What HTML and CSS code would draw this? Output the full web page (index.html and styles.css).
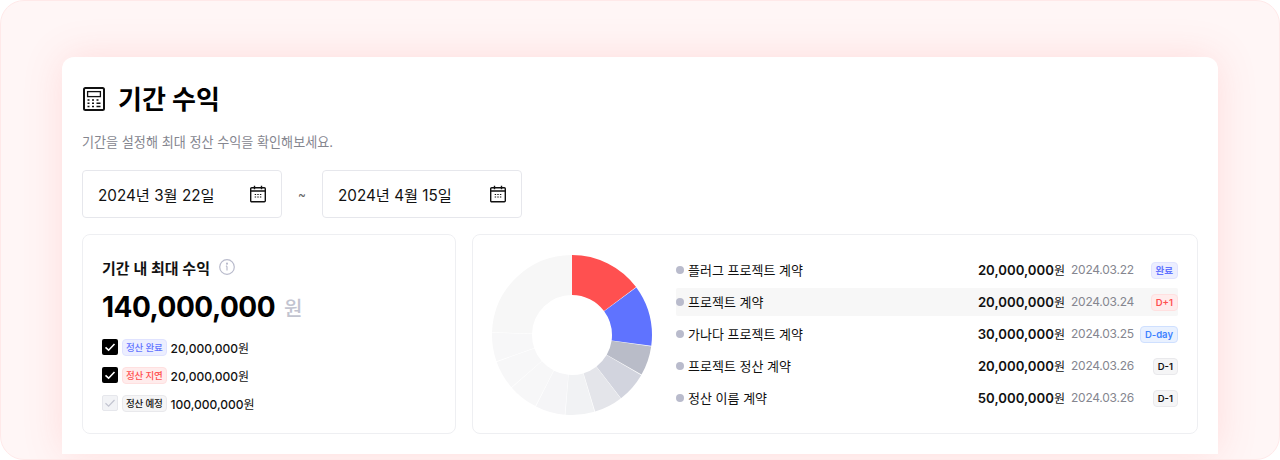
FILE: index.html
```html
<!DOCTYPE html>
<html lang="ko">
<head>
    <meta charset="utf-8">
    <title>기간 수익</title>
    <link rel="stylesheet" href="styles.css">
</head>
<body>
    <div class="frame">
        <div class="card">
            <div class="title-row">
                <svg class="title-icon" width="24" height="24" viewBox="0 0 24 24" fill="none" stroke="#111" stroke-width="2">
                    <rect x="2" y="1" width="20" height="22" rx="1.5"/>
                    <rect x="5.6" y="4.6" width="12.8" height="5" stroke-width="1.3"/>
                    <path d="M5.5 13h2M10 13h2M14.5 13h2M5.5 16.2h2M10 16.2h2M14.5 16.2h4M5.5 19.4h2M10 19.4h2M14.5 19.4h4" stroke-width="1.5"/>
                </svg>
                <h1 class="title">기간 수익</h1>
            </div>
            <p class="subtitle">기간을 설정해 최대 정산 수익을 확인해보세요.</p>

            <div class="date-row">
                <div class="date-box">
                    <span>2024년 3월 22일</span>
                    <svg width="18" height="18" viewBox="0 0 18 18" fill="none" stroke="#111" stroke-width="1.4">
                        <rect x="1.7" y="2.7" width="14.6" height="14" rx="1"/>
                        <path d="M1.7 6h14.6M5.5 .8v3.4M12.5 .8v3.4"/>
                        <path d="M5.7 9.5h1.4M8.3 9.5h1.4M10.9 9.5h1.4M5.7 12h1.4M8.3 12h1.4M10.9 12h1.4" stroke-width="1.2"/>
                    </svg>
                </div>
                <span class="tilde">~</span>
                <div class="date-box">
                    <span>2024년 4월 15일</span>
                    <svg width="18" height="18" viewBox="0 0 18 18" fill="none" stroke="#111" stroke-width="1.4">
                        <rect x="1.7" y="2.7" width="14.6" height="14" rx="1"/>
                        <path d="M1.7 6h14.6M5.5 .8v3.4M12.5 .8v3.4"/>
                        <path d="M5.7 9.5h1.4M8.3 9.5h1.4M10.9 9.5h1.4M5.7 12h1.4M8.3 12h1.4M10.9 12h1.4" stroke-width="1.2"/>
                    </svg>
                </div>
            </div>

            <div class="panels">
                <div class="panel panel-total">
                    <div class="total-head">
                        <span>기간 내 최대 수익</span>
                        <svg width="16" height="16" viewBox="0 0 16 16" fill="none" stroke="#b9bbcc" stroke-width="1.2">
                            <circle cx="8" cy="8" r="7.3"/>
                            <path d="M8 7.2v4.3M6.9 7.2H8" stroke-width="1.2"/>
                            <circle cx="8" cy="4.7" r=".5"/>
                        </svg>
                    </div>
                    <div class="total-value">140,000,000<span class="total-unit">원</span></div>
                    <div class="check-row">
                        <span class="check on"><svg width="12" height="12" viewBox="0 0 12 12" fill="none" stroke="#fff" stroke-width="1.6"><path d="M1.5 6.3 4.6 9.2 10.5 3"/></svg></span>
                        <span class="tag tag-blue">정산 완료</span>
                        <span class="check-amount">20,000,000<span class="won">원</span></span>
                    </div>
                    <div class="check-row">
                        <span class="check on"><svg width="12" height="12" viewBox="0 0 12 12" fill="none" stroke="#fff" stroke-width="1.6"><path d="M1.5 6.3 4.6 9.2 10.5 3"/></svg></span>
                        <span class="tag tag-red">정산 지연</span>
                        <span class="check-amount">20,000,000<span class="won">원</span></span>
                    </div>
                    <div class="check-row">
                        <span class="check off"><svg width="12" height="12" viewBox="0 0 12 12" fill="none" stroke="#c2c4d0" stroke-width="1.2"><path d="M1.5 6.3 4.6 9.2 10.5 3"/></svg></span>
                        <span class="tag tag-gray">정산 예정</span>
                        <span class="check-amount">100,000,000<span class="won">원</span></span>
                    </div>
                </div>

                <div class="panel panel-list">
                    <svg class="donut" width="160" height="160" viewBox="0 0 160 160" fill="none" stroke-width="40">
                        <g transform="rotate(-90 80 80)">
                            <circle cx="80" cy="80" r="60" pathLength="360" stroke="#ff5050" stroke-dasharray="53.2 306.8"/>
                            <circle cx="80" cy="80" r="60" pathLength="360" stroke="#5f73ff" stroke-dasharray="44.3 315.7" stroke-dashoffset="-53.5"/>
                            <circle cx="80" cy="80" r="60" pathLength="360" stroke="#b9bcc8" stroke-dasharray="21.4 338.6" stroke-dashoffset="-98.3"/>
                            <circle cx="80" cy="80" r="60" pathLength="360" stroke="#d2d4de" stroke-dasharray="22 338" stroke-dashoffset="-120.2"/>
                            <circle cx="80" cy="80" r="60" pathLength="360" stroke="#e4e5ea" stroke-dasharray="20.6 339.4" stroke-dashoffset="-142.5"/>
                            <circle cx="80" cy="80" r="60" pathLength="360" stroke="#f1f2f4" stroke-dasharray="21.2 338.8" stroke-dashoffset="-163.6"/>
                            <circle cx="80" cy="80" r="60" pathLength="360" stroke="#f5f5f7" stroke-dasharray="21.5 338.5" stroke-dashoffset="-185.3"/>
                            <circle cx="80" cy="80" r="60" pathLength="360" stroke="#f7f7f8" stroke-dasharray="21.5 338.5" stroke-dashoffset="-207.3"/>
                            <circle cx="80" cy="80" r="60" pathLength="360" stroke="#f7f7f8" stroke-dasharray="21 339" stroke-dashoffset="-229.3"/>
                            <circle cx="80" cy="80" r="60" pathLength="360" stroke="#f7f7f8" stroke-dasharray="20.8 339.2" stroke-dashoffset="-250.8"/>
                            <circle cx="80" cy="80" r="60" pathLength="360" stroke="#f7f7f7" stroke-dasharray="87.7 272.3" stroke-dashoffset="-272.1"/>
                        </g>
                    </svg>
                    <ul class="contract-list">
                        <li class="contract">
                            <span class="dot"></span><span class="contract-name">플러그 프로젝트 계약</span>
                            <span class="contract-amount">20,000,000<span class="won">원</span></span>
                            <span class="contract-date">2024.03.22</span>
                            <span class="badge-cell"><span class="tag tag-blue">완료</span></span>
                        </li>
                        <li class="contract active">
                            <span class="dot"></span><span class="contract-name">프로젝트 계약</span>
                            <span class="contract-amount">20,000,000<span class="won">원</span></span>
                            <span class="contract-date">2024.03.24</span>
                            <span class="badge-cell"><span class="tag tag-red">D+1</span></span>
                        </li>
                        <li class="contract">
                            <span class="dot"></span><span class="contract-name">가나다 프로젝트 계약</span>
                            <span class="contract-amount">30,000,000<span class="won">원</span></span>
                            <span class="contract-date">2024.03.25</span>
                            <span class="badge-cell"><span class="tag tag-sky">D-day</span></span>
                        </li>
                        <li class="contract">
                            <span class="dot"></span><span class="contract-name">프로젝트 정산 계약</span>
                            <span class="contract-amount">20,000,000<span class="won">원</span></span>
                            <span class="contract-date">2024.03.26</span>
                            <span class="badge-cell"><span class="tag tag-gray">D-1</span></span>
                        </li>
                        <li class="contract">
                            <span class="dot"></span><span class="contract-name">정산 이름 계약</span>
                            <span class="contract-amount">50,000,000<span class="won">원</span></span>
                            <span class="contract-date">2024.03.26</span>
                            <span class="badge-cell"><span class="tag tag-gray">D-1</span></span>
                        </li>
                    </ul>
                </div>
            </div>
        </div>
    </div>
</body>
</html>
```

FILE: styles.css
```css
* {
    box-sizing: border-box;
}
html, body {
    margin: 0;
    padding: 0;
    background-color: #fff;
}
body {
    font-family: Inter, "Noto Sans CJK KR", sans-serif;
    color: #111;
}
.frame {
    width: 1280px;
    height: 460px;
    padding: 56px 61px 5px 61px;
    background-color: #fff6f6;
    border: 1px solid #ffe9e9;
    border-radius: 24px;
    overflow: hidden;
}
.card {
    height: 397px;
    padding: 26px 20px 20px 20px;
    background-color: #fff;
    border-radius: 12px 12px 0 0;
    box-shadow: 0 0 40px rgba(255, 90, 90, 0.16);
}
.title-row {
    display: flex;
    align-items: center;
    gap: 12px;
    height: 32px;
}
.title {
    margin: 0;
    padding-top: 2px;
    font-size: 26px;
    font-weight: 700;
    line-height: 30px;
    color: #000;
}
.subtitle {
    margin: 17px 0 0 0;
    font-size: 13.1px;
    line-height: 20px;
    color: #85868f;
}
.date-row {
    display: flex;
    align-items: center;
    margin-top: 18px;
}
.date-box {
    display: flex;
    justify-content: space-between;
    align-items: center;
    width: 200px;
    height: 48px;
    padding: 0 14px 0 15px;
    border: 1px solid #e6e7ec;
    border-radius: 4px;
    font-size: 15.25px;
}
.tilde {
    width: 40px;
    text-align: center;
    font-size: 12px;
    color: #666;
}
.panels {
    display: flex;
    gap: 16px;
    margin-top: 16px;
}
.panel {
    height: 200px;
    border: 1px solid #eeeff2;
    border-radius: 8px;
}
.panel-total {
    width: 374px;
    padding: 21px 19px 0 19px;
}
.total-head {
    display: flex;
    align-items: center;
    gap: 9px;
    height: 22px;
    font-size: 15px;
    font-weight: 600;
}
.total-value {
    display: flex;
    align-items: center;
    gap: 9px;
    height: 38px;
    margin: 10px 0 7px 0;
    font-size: 28px;
    font-weight: 700;
    letter-spacing: -0.5px;
    color: #000;
}
.total-unit {
    font-size: 20px;
    font-weight: 500;
    color: #c2c4d0;
}
.check-row {
    display: flex;
    align-items: center;
    height: 28px;
    font-size: 12px;
    font-weight: 500;
}
.check {
    display: flex;
    justify-content: center;
    align-items: center;
    width: 16px;
    height: 16px;
    margin-right: 4px;
    border-radius: 2px;
}
.check.on {
    background-color: #000;
}
.check.off {
    background-color: #f2f3f6;
    border: 1px solid #e6e7ec;
}
.check-amount {
    margin-left: 4px;
}
.won {
    font-weight: 400;
}
.tag {
    display: inline-block;
    height: 17px;
    padding: 0 3px;
    border: 1px solid transparent;
    border-radius: 4px;
    font-size: 9.5px;
    font-weight: 500;
    line-height: 15px;
    letter-spacing: -0.2px;
    white-space: nowrap;
}
.tag-blue {
    color: #6274ff;
    background-color: #eceeff;
    border-color: #e0e3ff;
}
.tag-red {
    color: #ff5050;
    background-color: #ffecec;
    border-color: #ffe0e0;
}
.tag-sky {
    color: #3d82ff;
    background-color: #e9f1ff;
    border-color: #cfe0ff;
}
.tag-gray {
    color: #111;
    background-color: #f5f5f6;
    border-color: #e9e9ec;
}
.panel-list {
    flex: 1;
    display: flex;
    align-items: center;
    padding: 0 19px;
}
.donut {
    flex-shrink: 0;
    margin: 2px 24px 0 0;
}
.contract-list {
    flex: 1;
    display: flex;
    flex-direction: column;
    gap: 4px;
    margin: 0;
    padding: 0;
    list-style: none;
}
.contract {
    display: flex;
    align-items: center;
    height: 28px;
    border-radius: 2px;
}
.contract.active {
    background-color: #f7f7f7;
}
.dot {
    width: 8px;
    height: 8px;
    margin-right: 4px;
    border-radius: 50%;
    background-color: #b9bbcc;
}
.contract-name {
    flex: 1;
    padding-bottom: 2px;
    font-size: 13px;
}
.contract-amount {
    padding-bottom: 2px;
    font-size: 13.2px;
    font-weight: 600;
}
.contract-amount .won {
    font-size: 12px;
}
.contract-date {
    width: 70px;
    margin-left: 6px;
    padding-bottom: 2px;
    font-size: 12px;
    letter-spacing: -0.25px;
    color: #85868f;
}
.badge-cell {
    display: flex;
    justify-content: flex-end;
    width: 37px;
}
.badge-cell .tag {
    padding: 0 4px;
    font-weight: 600;
    letter-spacing: 0;
}
```
